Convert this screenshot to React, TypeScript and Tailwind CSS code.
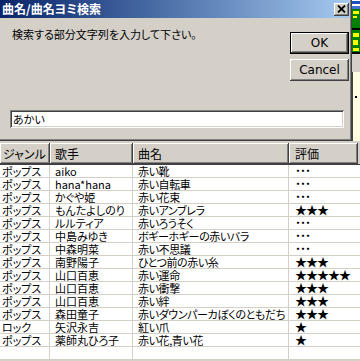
const rows: [string, string, string, string][] = [
  ['ポップス', 'aiko', '赤い靴', '･･･'],
  ['ポップス', 'hana*hana', '赤い自転車', '･･･'],
  ['ポップス', 'かぐや姫', '赤い花束', '･･･'],
  ['ポップス', 'もんたよしのり', '赤いアンブレラ', '★★★'],
  ['ポップス', 'ルルティア', '赤いろうそく', '･･･'],
  ['ポップス', '中島みゆき', 'ボギーホギーの赤いバラ', '･･･'],
  ['ポップス', '中森明菜', '赤い不思議', '･･･'],
  ['ポップス', '南野陽子', 'ひとつ前の赤い糸', '★★★'],
  ['ポップス', '山口百恵', '赤い運命', '★★★★★'],
  ['ポップス', '山口百恵', '赤い衝撃', '★★★'],
  ['ポップス', '山口百恵', '赤い絆', '★★★'],
  ['ポップス', '森田童子', '赤いダウンパーカぼくのともだち', '★★★'],
  ['ロック', '矢沢永吉', '紅い爪', '★'],
  ['ポップス', '薬師丸ひろ子', '赤い花,青い花', '★'],
  ['', '', '', ''],
];

const raised =
  'shadow-[inset_-1px_-1px_#404040,inset_1px_1px_#ffffff,inset_-2px_-2px_#808080,inset_2px_2px_#d4d0c8]';

function Dialog() {
  return (
    <div className="w-[352px] h-[141px] flex flex-col bg-[#d4d0c8] shadow-[inset_-1px_-1px_#404040,inset_-2px_-2px_#808080]">
      {/* title bar */}
      <div className="w-[350px] h-[18px] flex items-center justify-between bg-gradient-to-r from-[#0a246a] to-[#a6caf0]">
        <span className="pl-[2px] text-white font-bold text-[12px] leading-[18px]">曲名/曲名ヨミ検索</span>
        <div className={`w-[15px] h-[13px] mr-[1px] flex items-center justify-center bg-[#d4d0c8] ${raised}`}>
          <svg width="9" height="8" viewBox="0 0 9 8" className="-mt-[1px]">
            <path d="M1 0.5 L8 7.5 M8 0.5 L1 7.5" stroke="black" strokeWidth="1.8" />
          </svg>
        </div>
      </div>

      <div className="flex justify-between w-[350px]">
        <p className="pl-[12px] mt-[10px] text-[11px] leading-[13px]">検索する部分文字列を入力して下さい。</p>
        <div className="flex flex-col gap-[5px] mt-[14px] mr-[1px] w-[59px]">
          <button className="h-[22px] border border-black bg-[#d4d0c8] shadow-[inset_-1px_-1px_#404040,inset_1px_1px_#ffffff,inset_-2px_-2px_#808080] [font-family:'DejaVu_Sans',sans-serif] text-[12px]">
            OK
          </button>
          <button className={`h-[22px] bg-[#d4d0c8] ${raised} [font-family:'DejaVu_Sans',sans-serif] text-[12px]`}>
            Cancel
          </button>
        </div>
      </div>

      <div className="ml-[10px] mt-[29px] w-[334px] h-[18px] bg-white flex items-center px-[3px] text-[11px] shadow-[inset_1px_1px_#808080,inset_-1px_-1px_#ffffff,inset_2px_2px_#404040,inset_-2px_-2px_#d4d0c8]">
        あかい
      </div>
    </div>
  );
}

function BehindStrip() {
  return (
    <div className="flex-1 h-[141px] flex flex-col">
      <div className="h-[1px] bg-white" />
      <div className="h-[3px] bg-[#2050c0]" />
      <div className="h-[2px] bg-white" />
      <div className="h-[3px] bg-[#4070d0]" />
      <div className="h-[19px] bg-[#008000] flex flex-col gap-[2px] px-[1px] pt-[2px]">
        <div className="h-[3px] bg-[#ffff00]" />
        <div className="h-[2px] bg-[#ffff00] w-[4px]" />
      </div>
      <div className="h-[2px] bg-black" />
      <div className="h-[22px] bg-[#008000] flex flex-col gap-[3px] px-[1px] pt-[3px]">
        <div className="h-[4px] bg-[#ffff00]" />
        <div className="h-[5px] bg-[#ffff00] w-[5px]" />
        <div className="h-[3px] bg-[#ffff00]" />
      </div>
      <div className="h-[2px] bg-black" />
      <div className="h-[18px] bg-[#d4d0c8]" />
      <div className="flex-1 bg-[#ffffe1] border-l border-[#404040] relative">
        <div className="absolute left-[2px] top-[24px] w-[2px] h-[2px] bg-black" />
      </div>
    </div>
  );
}

export default function App() {
  return (
    <div className="w-[360px] h-[361px] overflow-hidden bg-[#d4d0c8] text-[11px] leading-[12px] text-black [font-family:'Noto_Sans_CJK_JP',sans-serif] [font-feature-settings:'palt']">
      <div className="flex">
        <Dialog />
        <BehindStrip />
      </div>

      <div className="pt-[2px]">
        {/* header */}
        <div className="flex h-[22px] border-b border-[#404040] text-[12px]">
          <div className={`w-[50px] pl-[3px] flex items-center ${raised}`}>ジャンル</div>
          <div className={`w-[83px] pl-[5px] flex items-center ${raised}`}>歌手</div>
          <div className={`w-[156px] pl-[5px] flex items-center ${raised}`}>曲名</div>
          <div className={`w-[69px] pl-[6px] flex items-center ${raised}`}>評価</div>
          <div className="flex-1" />
        </div>

        {/* rows */}
        <div className="bg-white">
          {rows.map((r, i) => (
            <div key={i} className="flex h-[13px] border-b border-[#d4d0c8] leading-[12px]">
              <div className="w-[50px] pl-[2px] border-r border-[#d4d0c8] whitespace-nowrap">{r[0]}</div>
              <div className="w-[83px] pl-[5px] border-r border-[#d4d0c8] whitespace-nowrap">{r[1]}</div>
              <div className="w-[156px] pl-[5px] border-r border-[#d4d0c8] whitespace-nowrap tracking-[-0.4px]">{r[2]}</div>
              <div className={`flex-1 pl-[6px] whitespace-nowrap ${r[3].startsWith('★') ? 'text-[12px] tracking-[-1px]' : 'font-bold text-[12px] tracking-[-1px]'}`}>{r[3]}</div>
            </div>
          ))}
        </div>
      </div>
    </div>
  );
}
